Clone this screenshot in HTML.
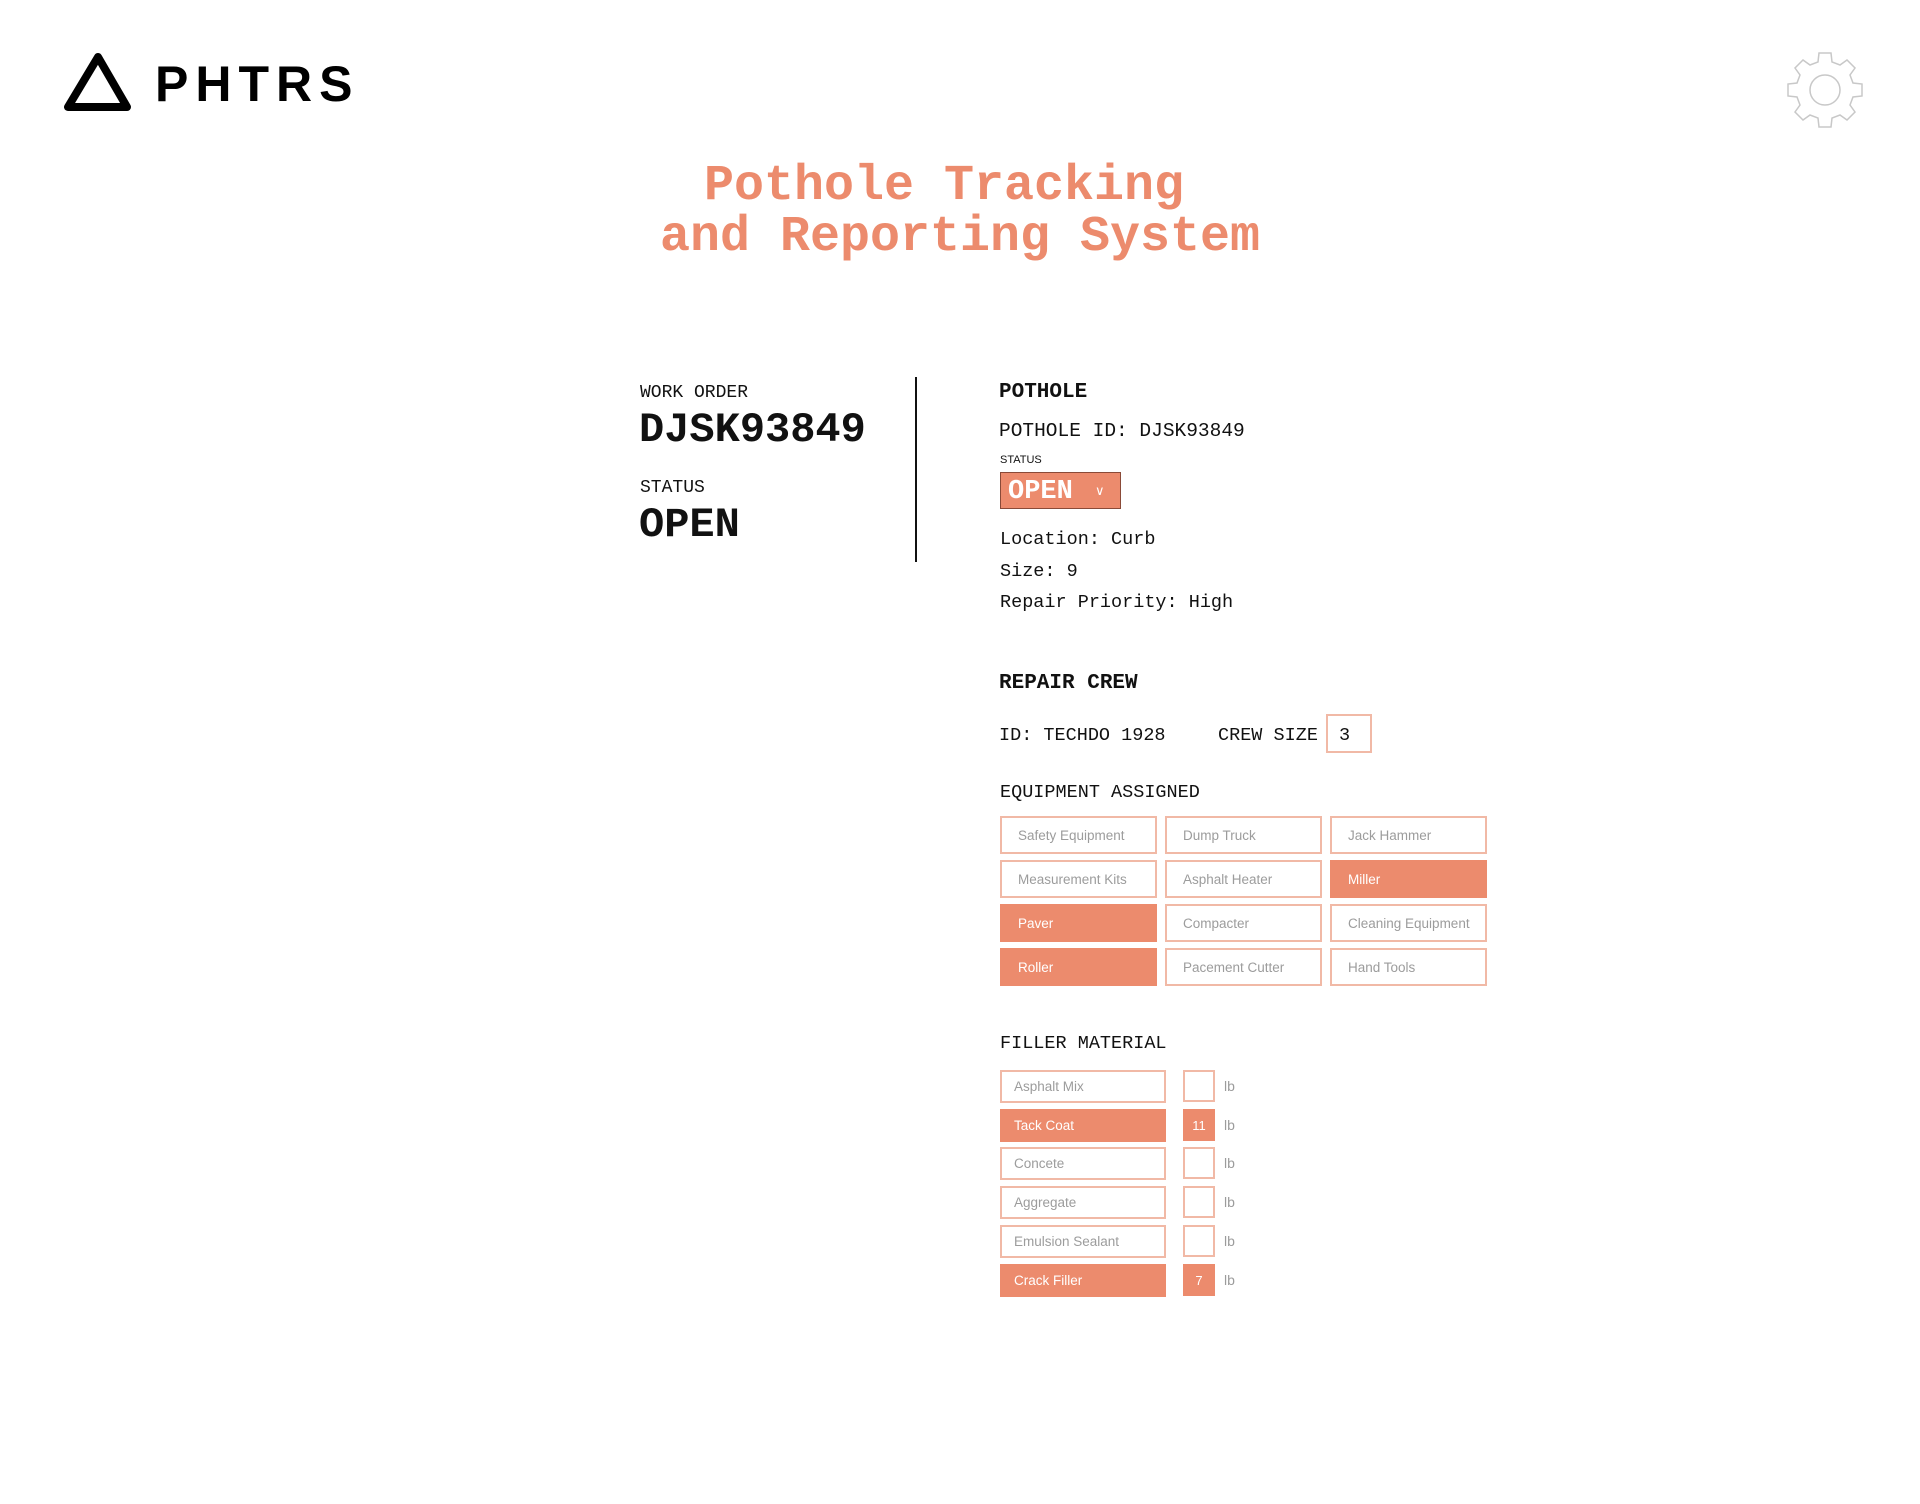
<!DOCTYPE html>
<html><head><meta charset="utf-8"><style>
*{margin:0;padding:0;box-sizing:border-box}
body{width:1920px;height:1504px;background:#fff;position:relative;overflow:hidden;font-family:"Liberation Mono",monospace;color:#111}
.a{position:absolute;white-space:nowrap;line-height:1}
.m{font-family:"Liberation Mono",monospace}
.s{font-family:"Liberation Sans",sans-serif}
.t{position:absolute;left:0;width:1920px;text-align:center;font-size:50px;font-weight:bold;color:#ec8b6d;line-height:1}
.b{position:absolute;border:2px solid #f1b9a6;font-family:"Liberation Sans",sans-serif;font-size:13.5px;color:#9c9c9c;display:flex;align-items:center;padding-left:16px;background:#fff}
.b.on{background:#ec8b6d;border-color:#ec8b6d;color:#fff}
.f{padding-left:12px}
.q{position:absolute;border:2px solid #f1b9a6;width:32px;height:32px;left:1183px;font-family:"Liberation Sans",sans-serif;font-size:13px;color:#fff;display:flex;align-items:center;justify-content:center}
.q.on{background:#ec8b6d;border-color:#ec8b6d}
.lb{position:absolute;left:1224px;font-family:"Liberation Sans",sans-serif;font-size:14px;color:#9c9c9c;line-height:32px}
</style></head><body>
<svg class="a" style="left:0;top:0" width="400" height="130">
<path d="M98 57 L68 107 L127 107 Z" fill="none" stroke="#000" stroke-width="8" stroke-linejoin="round"/>
<text x="155" y="101" font-family="Liberation Sans" font-weight="bold" font-size="50" letter-spacing="7" fill="#000">PHTRS</text>
</svg>
<svg class="a" style="left:1780px;top:45px" width="90" height="90" viewBox="-45 -45 90 90">
<g fill="none" stroke="#c8c8c8" stroke-width="1.5">
<path d="M-6,-37 L6,-37 L7,-28 L15,-25 L22,-30 L30,-22 L25,-15 L28,-7 L37,-6 L37,6 L28,7 L25,15 L30,22 L22,30 L15,25 L7,28 L6,37 L-6,37 L-7,28 L-15,25 L-22,30 L-30,22 L-25,15 L-28,7 L-37,6 L-37,-6 L-28,-7 L-25,-15 L-30,-22 L-22,-30 L-15,-25 L-7,-28 Z"/>
<circle r="15"/></g></svg>

<div class="t" style="top:162px;left:-16px">Pothole Tracking</div>
<div class="t" style="top:213px">and Reporting System</div>

<div class="a m" style="left:640px;top:384px;font-size:18px">WORK ORDER</div>
<div class="a m" style="left:639px;top:409px;font-size:42px;font-weight:bold">DJSK93849</div>
<div class="a m" style="left:640px;top:479px;font-size:18px">STATUS</div>
<div class="a m" style="left:639px;top:504px;font-size:42px;font-weight:bold">OPEN</div>
<div class="a" style="left:915px;top:377px;width:2px;height:185px;background:#111"></div>

<div class="a m" style="left:999px;top:382px;font-size:21px;font-weight:bold">POTHOLE</div>
<div class="a m" style="left:999px;top:422px;font-size:19.5px">POTHOLE ID: DJSK93849</div>
<div class="a s" style="left:1000px;top:455px;font-size:11px">STATUS</div>
<div class="a" style="left:1000px;top:472px;width:121px;height:37px;background:#ec8b6d;border:1.5px solid #8a4a38"></div>
<div class="a m" style="left:1008px;top:479px;font-size:27px;font-weight:bold;color:#fff">OPEN</div>
<div class="a s" style="left:1095px;top:484px;font-size:13px;color:#fff">&#8744;</div>
<div class="a m" style="left:1000px;top:531px;font-size:18.5px">Location: Curb</div>
<div class="a m" style="left:1000px;top:563px;font-size:18.5px">Size: 9</div>
<div class="a m" style="left:1000px;top:594px;font-size:18.5px">Repair Priority: High</div>

<div class="a m" style="left:999px;top:673px;font-size:21px;font-weight:bold">REPAIR CREW</div>
<div class="a m" style="left:999px;top:727px;font-size:18.5px">ID: TECHDO 1928</div>
<div class="a m" style="left:1218px;top:727px;font-size:18.5px">CREW SIZE</div>
<div class="a" style="left:1326px;top:714px;width:46px;height:39px;border:2px solid #f1b9a6"></div>
<div class="a m" style="left:1339px;top:727px;font-size:18.5px">3</div>

<div class="a m" style="left:1000px;top:784px;font-size:18.5px">EQUIPMENT ASSIGNED</div>
<div class="b" style="left:1000px;top:816px;width:157px;height:38px">Safety Equipment</div>
<div class="b" style="left:1165px;top:816px;width:157px;height:38px">Dump Truck</div>
<div class="b" style="left:1330px;top:816px;width:157px;height:38px">Jack Hammer</div>
<div class="b" style="left:1000px;top:860px;width:157px;height:38px">Measurement Kits</div>
<div class="b" style="left:1165px;top:860px;width:157px;height:38px">Asphalt Heater</div>
<div class="b on" style="left:1330px;top:860px;width:157px;height:38px">Miller</div>
<div class="b on" style="left:1000px;top:904px;width:157px;height:38px">Paver</div>
<div class="b" style="left:1165px;top:904px;width:157px;height:38px">Compacter</div>
<div class="b" style="left:1330px;top:904px;width:157px;height:38px">Cleaning Equipment</div>
<div class="b on" style="left:1000px;top:948px;width:157px;height:38px">Roller</div>
<div class="b" style="left:1165px;top:948px;width:157px;height:38px">Pacement Cutter</div>
<div class="b" style="left:1330px;top:948px;width:157px;height:38px">Hand Tools</div>

<div class="a m" style="left:1000px;top:1035px;font-size:18.5px">FILLER MATERIAL</div>
<div class="b f" style="left:1000px;top:1070px;width:166px;height:33px">Asphalt Mix</div>
<div class="q" style="top:1070px"></div><div class="lb" style="top:1070px">lb</div>
<div class="b f on" style="left:1000px;top:1109px;width:166px;height:33px">Tack Coat</div>
<div class="q on" style="top:1109px">11</div><div class="lb" style="top:1109px">lb</div>
<div class="b f" style="left:1000px;top:1147px;width:166px;height:33px">Concete</div>
<div class="q" style="top:1147px"></div><div class="lb" style="top:1147px">lb</div>
<div class="b f" style="left:1000px;top:1186px;width:166px;height:33px">Aggregate</div>
<div class="q" style="top:1186px"></div><div class="lb" style="top:1186px">lb</div>
<div class="b f" style="left:1000px;top:1225px;width:166px;height:33px">Emulsion Sealant</div>
<div class="q" style="top:1225px"></div><div class="lb" style="top:1225px">lb</div>
<div class="b f on" style="left:1000px;top:1264px;width:166px;height:33px">Crack Filler</div>
<div class="q on" style="top:1264px">7</div><div class="lb" style="top:1264px">lb</div>
</body></html>
